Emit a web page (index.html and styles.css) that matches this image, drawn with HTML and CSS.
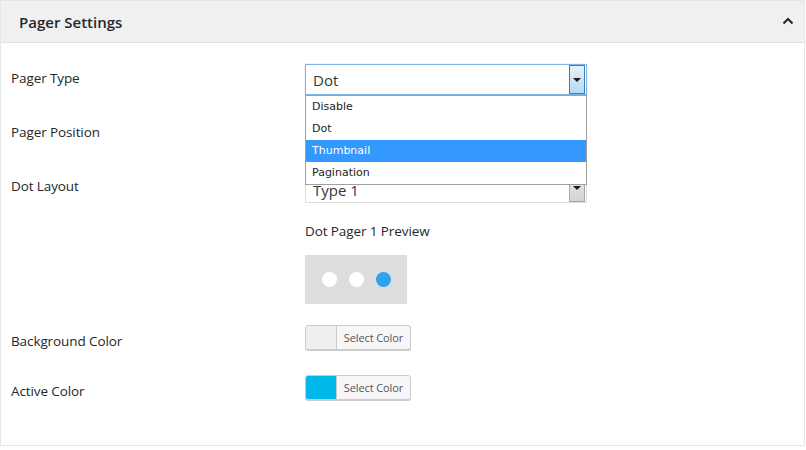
FILE: index.html
```html
<!DOCTYPE html>
<html>
<head>
<meta charset="utf-8">
<link rel="stylesheet" href="styles.css">
</head>
<body>
<div class="panel">
  <div class="panel-head">
    <h2 class="panel-title">Pager Settings</h2>
    <svg class="chev" width="12" height="8" viewBox="0 0 12 8"><polyline points="1.5,6.5 6,2 10.5,6.5" fill="none" stroke="#23282d" stroke-width="2"/></svg>
  </div>
  <div class="panel-body">
    <div class="row row-select first">
      <div class="label">Pager Type</div>
      <div class="control">
        <div class="select focused">
          <span class="sel-text">Dot</span>
          <span class="sel-btn blue"><span class="tri"></span></span>
        </div>
        <ul class="dropdown">
          <li>Disable</li>
          <li>Dot</li>
          <li class="hl">Thumbnail</li>
          <li>Pagination</li>
        </ul>
      </div>
    </div>
    <div class="row row-select">
      <div class="label">Pager Position</div>
      <div class="control">
        <div class="select">
          <span class="sel-text"></span>
          <span class="sel-btn"><span class="tri"></span></span>
        </div>
      </div>
    </div>
    <div class="row row-select">
      <div class="label">Dot Layout</div>
      <div class="control">
        <div class="select">
          <span class="sel-text low">Type 1</span>
          <span class="sel-btn"><span class="tri"></span></span>
        </div>
      </div>
    </div>
    <div class="preview-block">
      <div class="preview-title">Dot Pager 1 Preview</div>
      <div class="preview-box">
        <span class="dot"></span><span class="dot"></span><span class="dot active"></span>
      </div>
    </div>
    <div class="row row-color first-color">
      <div class="label">Background Color</div>
      <div class="control">
        <div class="color-btn"><span class="swatch"></span><span class="color-text">Select Color</span></div>
      </div>
    </div>
    <div class="row row-color">
      <div class="label">Active Color</div>
      <div class="control">
        <div class="color-btn"><span class="swatch cyan"></span><span class="color-text">Select Color</span></div>
      </div>
    </div>
  </div>
</div>
</body>
</html>
```
FILE: styles.css
```css
* { box-sizing: border-box; }
html, body { margin: 0; padding: 0; background: #ffffff; }
body { font-family: "Open Sans", "Noto Sans", sans-serif; color: #23282d; }

.panel {
  width: 805px;
  height: 446px;
  border: 1px solid #e5e5e5;
}
.panel-head {
  height: 42px;
  background: #f0f0f0;
  border-bottom: 1px solid #e2e2e2;
  display: flex;
  align-items: center;
  justify-content: space-between;
  padding: 0 10px 0 18px;
}
.panel-title {
  margin: 0;
  font-size: 15px;
  font-weight: 600;
  color: #23282d;
  letter-spacing: 0;
}
.chev { margin-top: -1px; }

.panel-body { padding: 0 10px; }

.row { display: flex; align-items: flex-start; }
.label {
  width: 294px;
  font-size: 13.5px;
  line-height: 18px;
  color: #23282d;
  letter-spacing: -0.1px;
}
.control { position: relative; }

.row-select { margin-top: 23px; height: 31px; }
.row-select.first { margin-top: 21px; }
.row-select .label { padding-top: 5px; }

.select {
  width: 282px;
  height: 31px;
  border: 1px solid #dddddd;
  background: #fff;
  display: flex;
  align-items: center;
  justify-content: space-between;
  padding: 0 1px 0 7px;
  font-size: 15px;
  color: #32373c;
}
.sel-text.low { margin-top: 4px; }
.select.focused { border-color: #7fb4e6; box-shadow: 0 0 1px #9cc5ec; }
.sel-btn {
  width: 16px;
  height: 29px;
  background: linear-gradient(#e8e8e8, #d4d4d4);
  border: 1px solid #a8a8a8;
  display: flex;
  align-items: center;
  justify-content: center;
}
.sel-btn.blue {
  background: linear-gradient(#e5f1fb, #b7daf5);
  border-color: #3c7fb1;
}
.tri {
  width: 0; height: 0;
  border-left: 4px solid transparent;
  border-right: 4px solid transparent;
  border-top: 4px solid #1a1a1a;
}

.dropdown {
  position: absolute;
  left: 0;
  top: 31px;
  width: 282px;
  margin: 0;
  padding: 0;
  list-style: none;
  background: #fff;
  border: 1px solid #a0a0a0;
  z-index: 5;
  font-family: "DejaVu Sans", "Noto Sans", sans-serif;
  font-size: 11px;
  color: #1e1e1e;
}
.dropdown li {
  height: 22px;
  line-height: 22px;
  padding-left: 6px;
}
.dropdown li.hl { background: #3399ff; color: #fff; }

.preview-block { padding-left: 294px; margin-top: 19px; }
.preview-title {
  font-size: 13.5px;
  line-height: 18px;
  letter-spacing: -0.1px;
  color: #23282d;
}
.preview-box {
  margin-top: 15px;
  width: 102px;
  height: 49px;
  background: #dddddd;
  display: flex;
  align-items: center;
  padding-left: 17px;
  gap: 12px;
}
.dot {
  width: 15px;
  height: 15px;
  border-radius: 50%;
  background: #ffffff;
}
.dot.active { background: #2fa0f2; }

.row-color { height: 24px; margin-top: 26px; }
.row-color.first-color { margin-top: 21px; }
.row-color .label { padding-top: 7px; }

.color-btn {
  display: flex;
  width: 106px;
  height: 25px;
  border: 1px solid #cccccc;
  border-radius: 3px;
  overflow: hidden;
  background: #f7f7f7;
  box-shadow: 0 1px 0 #cccccc;
}
.swatch {
  width: 31px;
  height: 100%;
  background: #efefef;
  border-right: 1px solid #cccccc;
}
.swatch.cyan { background: #00b9eb; }
.color-text {
  flex: 1;
  font-size: 11px;
  line-height: 23px;
  text-align: center;
  color: #555;
  letter-spacing: -0.1px;
}
```
